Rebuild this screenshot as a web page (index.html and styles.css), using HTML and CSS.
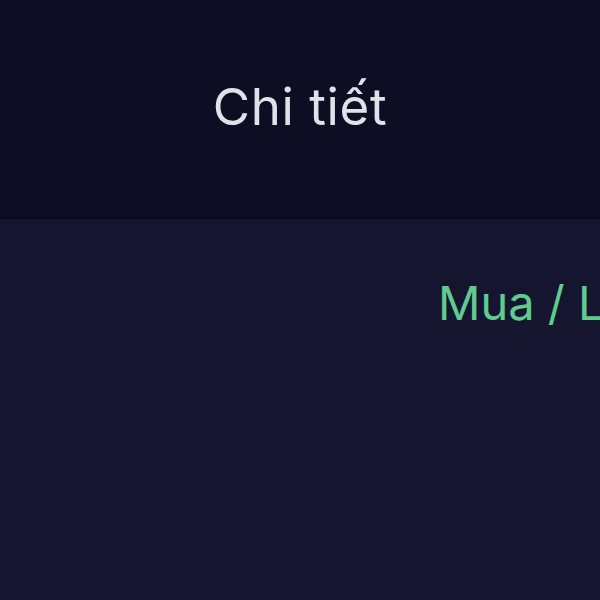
FILE: index.html
```html
<!DOCTYPE html>
<html lang="vi">
<head>
  <meta charset="UTF-8" />
  <meta name="viewport" content="width=device-width, initial-scale=1.0"/>
  <title>Chi tiết</title>
  <link rel="stylesheet" href="styles.css">
</head>
<body>
  <div class="screen">
    <div class="header">
      <div class="title">Chi tiết</div>
    </div>
    <div class="content">
      <div class="row">
        <div class="type">Mua / Lệnh mua</div>
      </div>
    </div>
  </div>
</body>
</html>
```

FILE: styles.css
```css
body {
  margin: 0;
  background-color: #16152f;
  font-family: Inter, "Noto Sans", sans-serif;
}

.screen {
  width: 600px;
  height: 600px;
  display: flex;
  flex-direction: column;
  overflow: hidden;
}

.header {
  background-color: #0e0d23;
  height: 217px;
  border-bottom: 2px solid #0a0920;
  display: flex;
  align-items: center;
  justify-content: center;
}

.title {
  color: #e2e1ea;
  font-size: 51px;
  letter-spacing: 0.6px;
  margin-top: -5px;
}

.content {
  flex: 1;
  background-color: #16152f;
}

.row {
  padding: 55px 0 0 438px;
  white-space: nowrap;
}

.type {
  color: #5fcb8c;
  font-size: 47px;
}
```
